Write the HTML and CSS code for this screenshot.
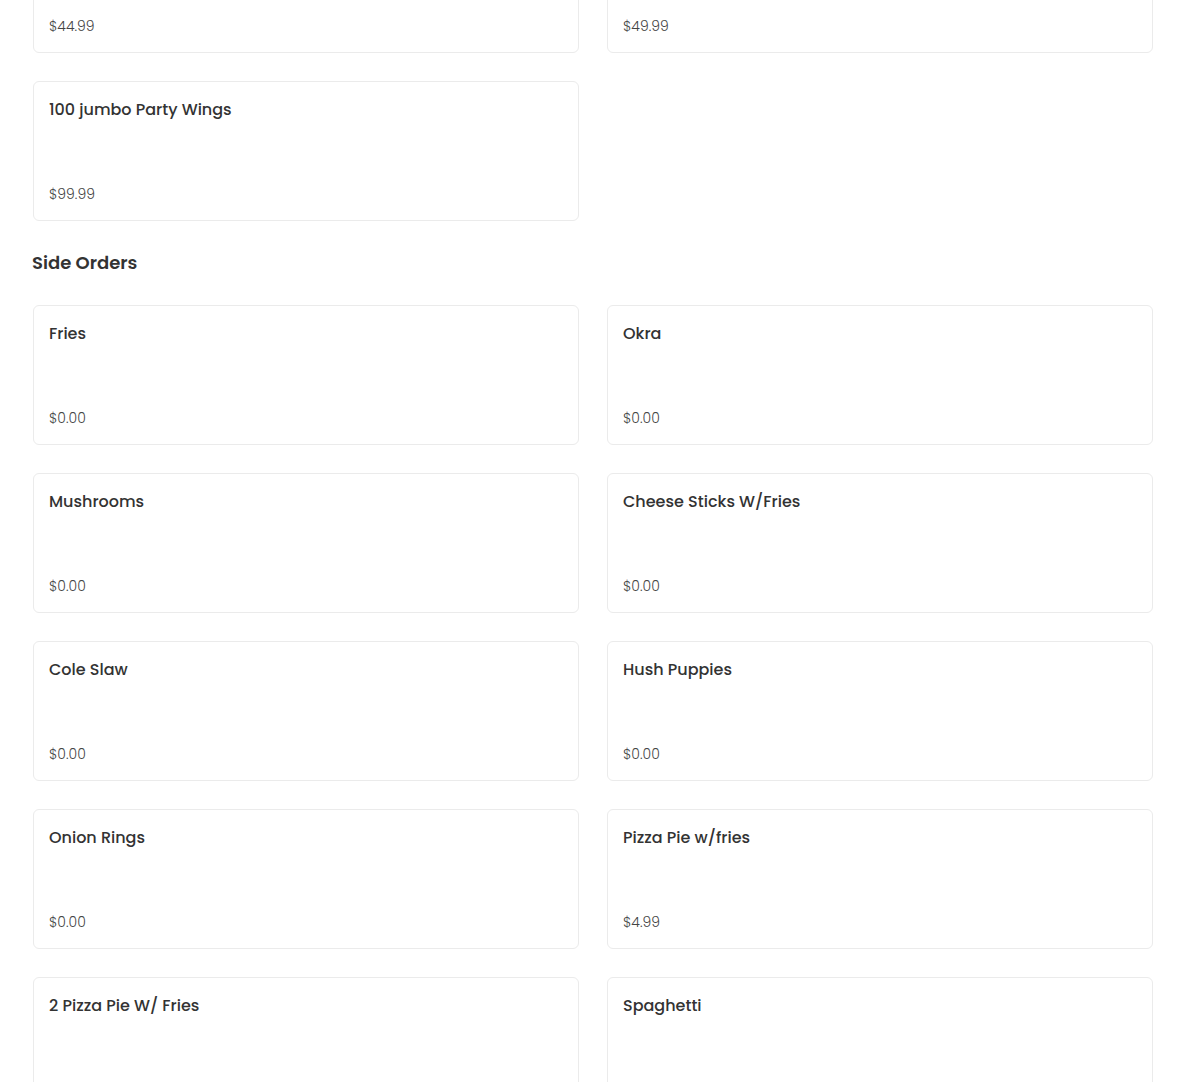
FILE: index.html
```html
<!DOCTYPE html>
<html>
<head>
<meta charset="utf-8">
<link rel="stylesheet" href="styles.css">
</head>
<body>
<div class="page">
  <section class="category">
    <div class="grid">
      <div class="card"><div class="name">50 jumbo Party Wings</div><div class="price">$44.99</div></div>
      <div class="card"><div class="name">60 jumbo Party Wings</div><div class="price">$49.99</div></div>
      <div class="card"><div class="name">100 jumbo Party Wings</div><div class="price">$99.99</div></div>
    </div>
  </section>
  <section class="category">
    <h2 class="cat-title">Side Orders</h2>
    <div class="grid">
      <div class="card"><div class="name">Fries</div><div class="price">$0.00</div></div>
      <div class="card"><div class="name">Okra</div><div class="price">$0.00</div></div>
      <div class="card"><div class="name">Mushrooms</div><div class="price">$0.00</div></div>
      <div class="card"><div class="name">Cheese Sticks W/Fries</div><div class="price">$0.00</div></div>
      <div class="card"><div class="name">Cole Slaw</div><div class="price">$0.00</div></div>
      <div class="card"><div class="name">Hush Puppies</div><div class="price">$0.00</div></div>
      <div class="card"><div class="name">Onion Rings</div><div class="price">$0.00</div></div>
      <div class="card"><div class="name">Pizza Pie w/fries</div><div class="price">$4.99</div></div>
      <div class="card"><div class="name">2 Pizza Pie W/ Fries</div><div class="price">$9.99</div></div>
      <div class="card"><div class="name">Spaghetti</div><div class="price">$0.00</div></div>
    </div>
  </section>
</div>
</body>
</html>
```
FILE: styles.css
```css
html, body {
  margin: 0;
  padding: 0;
  background: #fff;
}
body {
  font-family: "Poppins", "Open Sans", "Liberation Sans", sans-serif;
  color: #333;
  overflow: hidden;
}
.page {
  margin-top: -87px;
  padding: 0 32px 0 33px;
}
.grid {
  display: grid;
  grid-template-columns: 1fr 1fr;
  column-gap: 28px;
  row-gap: 28px;
}
.cat-title {
  margin: 28px 0 29px -1px;
  font-size: 18px;
  line-height: 27px;
  font-weight: 600;
  color: #333;
}
.card {
  box-sizing: border-box;
  height: 140px;
  border: 1px solid #ebebeb;
  border-radius: 6px;
  padding: 16px 15px 16px 15px;
  display: flex;
  flex-direction: column;
  justify-content: space-between;
}
.name {
  font-size: 16px;
  line-height: 24px;
  font-weight: 500;
  color: #333;
}
.price {
  font-size: 14px;
  line-height: 20px;
  font-weight: 300;
  color: #444;
}
```
